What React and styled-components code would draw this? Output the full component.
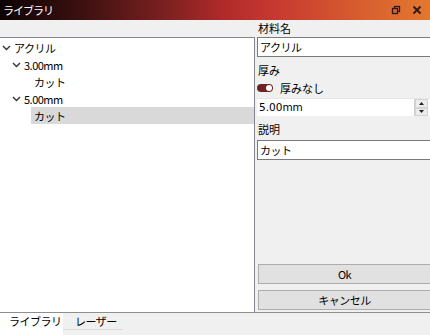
import React from 'react';
import styled, { createGlobalStyle } from 'styled-components';

const GlobalStyle = createGlobalStyle`
  html, body {
    margin: 0;
    padding: 0;
    background: #f0f0f0;
  }
  body {
    font-family: "Noto Sans CJK JP", "Noto Sans", sans-serif;
    font-size: 11px;
    color: #000;
  }
`;

const Window = styled.div`
  width: 430px;
  height: 335px;
  display: flex;
  flex-direction: column;
  overflow: hidden;
  background: #f0f0f0;
`;

const TitleBar = styled.div`
  height: 20px;
  flex: none;
  display: flex;
  align-items: center;
  padding: 0 4px 0 3px;
  background: linear-gradient(90deg, #0d0303 0%, #3a0f0f 18%, #7a2020 38%, #b02a2a 52%, #c83a30 65%, #d8602f 85%, #e3782e 100%);
`;

const Title = styled.span`
  flex: 1;
  color: #fff;
  font-size: 11px;
  letter-spacing: -1px;
  line-height: 20px;
`;

const TitleButton = styled.span`
  width: 18px;
  height: 16px;
  display: flex;
  align-items: center;
  justify-content: center;
  margin-left: 3px;
`;

const Main = styled.div`
  flex: 1;
  display: grid;
  grid-template-columns: 255px 1fr;
  column-gap: 1px;
  min-height: 0;
`;

const TreePane = styled.div`
  padding-top: 17px;
  display: flex;
  flex-direction: column;
`;

const Tree = styled.div`
  flex: 1;
  background: #fff;
  border-top: 1px solid #828790;
  border-right: 1px solid #828790;
  padding-top: 1px;
`;

const Row = styled.div`
  height: 17px;
  display: flex;
  align-items: center;
  padding-left: ${p => p.$level * 10 + 2}px;
`;

const RowLabel = styled.span`
  display: flex;
  align-items: center;
  height: 17px;
  flex: ${p => (p.$selected ? 1 : 'none')};
  background: ${p => (p.$selected ? '#d9d9d9' : 'transparent')};
  padding-left: ${p => (p.$leaf ? '3px' : '0')};
  margin-left: ${p => (p.$leaf ? '9px' : '0')};
  letter-spacing: -0.5px;
  white-space: nowrap;
`;

const Chevron = styled.svg`
  width: 9px;
  height: 6px;
  margin-right: 3px;
  flex: none;
`;

const Form = styled.div`
  display: flex;
  flex-direction: column;
  padding: 0 0 2px 1px;
`;

const Label = styled.div`
  height: 17px;
  line-height: 17px;
  padding-left: 1px;
  margin-top: ${p => p.$top || 0}px;
`;

const TextInput = styled.div`
  height: 18px;
  line-height: 18px;
  background: #fff;
  border: 1px solid #7a7a7a;
  border-right: none;
  padding-left: 2px;
  letter-spacing: -0.5px;
  margin-top: ${p => p.$top || 0}px;
`;

const ToggleRow = styled.div`
  height: 17px;
  display: flex;
  align-items: center;
  gap: 7px;
`;

const Toggle = styled.span`
  width: 16px;
  height: 8px;
  border-radius: 4px;
  background: #6e2424;
  position: relative;
  &::after {
    content: '';
    position: absolute;
    right: 1px;
    top: 1px;
    width: 6px;
    height: 6px;
    border-radius: 3px;
    background: #fff;
  }
`;

const SpinBox = styled.div`
  height: 17px;
  margin-top: 2px;
  display: flex;
  background: #fff;
  border-top: 1px solid #e6e6e6;
`;

const SpinText = styled.span`
  flex: 1;
  padding-left: 2px;
  line-height: 16px;
  font-family: "DejaVu Sans", sans-serif;
  font-size: 10.5px;
`;

const SpinButtons = styled.div`
  width: 13px;
  margin-right: 2px;
  display: flex;
  flex-direction: column;
  border-left: 1px solid #d0d0d0;
`;

const SpinButton = styled.div`
  flex: 1;
  display: flex;
  align-items: center;
  justify-content: center;
  background: #ececec;
  border: 1px solid #d4d4d4;
`;

const Spacer = styled.div`
  flex: 1;
`;

const Button = styled.button`
  height: 20px;
  margin: ${p => p.$top || 0}px 0 0 1px;
  background: #e1e1e1;
  border: 1px solid #adadad;
  border-right: none;
  font-family: inherit;
  font-size: 11px;
  letter-spacing: -0.5px;
  color: #000;
  padding: 0;
`;

const TabBar = styled.div`
  height: 22px;
  flex: none;
  display: flex;
  border-top: 1px solid #8e8e8e;
`;

const Tab = styled.div`
  width: ${p => p.$width}px;
  height: ${p => (p.$active ? 22 : 17)}px;
  background: ${p => (p.$active ? '#fff' : '#f0f0f0')};
  border-bottom: ${p => (p.$active ? 'none' : '1px solid #dcdcdc')};
  padding-left: ${p => p.$pad}px;
  line-height: 17px;
  letter-spacing: -0.5px;
  white-space: nowrap;
  box-sizing: border-box;
`;

const ChevronIcon = () => (
  <Chevron viewBox="0 0 9 6">
    <path d="M1 1 L4.5 4.5 L8 1" fill="none" stroke="#333" strokeWidth="1.4" />
  </Chevron>
);

const tree = [
  { level: 0, text: 'アクリル', open: true },
  { level: 1, text: '3.00mm', open: true },
  { level: 2, text: 'カット' },
  { level: 1, text: '5.00mm', open: true },
  { level: 2, text: 'カット', selected: true },
];

export default function App() {
  return (
    <Window>
      <GlobalStyle />
      <TitleBar>
        <Title>ライブラリ</Title>
        <TitleButton>
          <svg width="10" height="10" viewBox="0 0 10 10">
            <rect x="3.5" y="1.5" width="5" height="5" fill="none" stroke="#2a1a1a" strokeWidth="1.3" />
            <rect x="1.5" y="3.5" width="5" height="5" fill="#d9652f" stroke="#2a1a1a" strokeWidth="1.3" />
          </svg>
        </TitleButton>
        <TitleButton>
          <svg width="10" height="10" viewBox="0 0 10 10">
            <path d="M1.5 1.5 L8.5 8.5 M8.5 1.5 L1.5 8.5" stroke="#2a1a1a" strokeWidth="1.8" />
          </svg>
        </TitleButton>
      </TitleBar>
      <Main>
        <TreePane>
          <Tree>
            {tree.map((r, i) => (
              <Row key={i} $level={r.level}>
                {r.open && <ChevronIcon />}
                <RowLabel $leaf={!r.open} $selected={r.selected}>{r.text}</RowLabel>
              </Row>
            ))}
          </Tree>
        </TreePane>
        <Form>
          <Label>材料名</Label>
          <TextInput>アクリル</TextInput>
          <Label $top={5}>厚み</Label>
          <ToggleRow>
            <Toggle />
            <span>厚みなし</span>
          </ToggleRow>
          <SpinBox>
            <SpinText>5.00mm</SpinText>
            <SpinButtons>
              <SpinButton>
                <svg width="5" height="3" viewBox="0 0 5 3"><path d="M0 3 L2.5 0 L5 3Z" fill="#222" /></svg>
              </SpinButton>
              <SpinButton>
                <svg width="5" height="3" viewBox="0 0 5 3"><path d="M0 0 L2.5 3 L5 0Z" fill="#222" /></svg>
              </SpinButton>
            </SpinButtons>
          </SpinBox>
          <Label $top={5}>説明</Label>
          <TextInput $top={2}>カット</TextInput>
          <Spacer />
          <Button>Ok</Button>
          <Button $top={6}>キャンセル</Button>
        </Form>
      </Main>
      <TabBar>
        <Tab $active $width={63} $pad={9}>ライブラリ</Tab>
        <Tab $width={60} $pad={12}>レーザー</Tab>
      </TabBar>
    </Window>
  );
}
